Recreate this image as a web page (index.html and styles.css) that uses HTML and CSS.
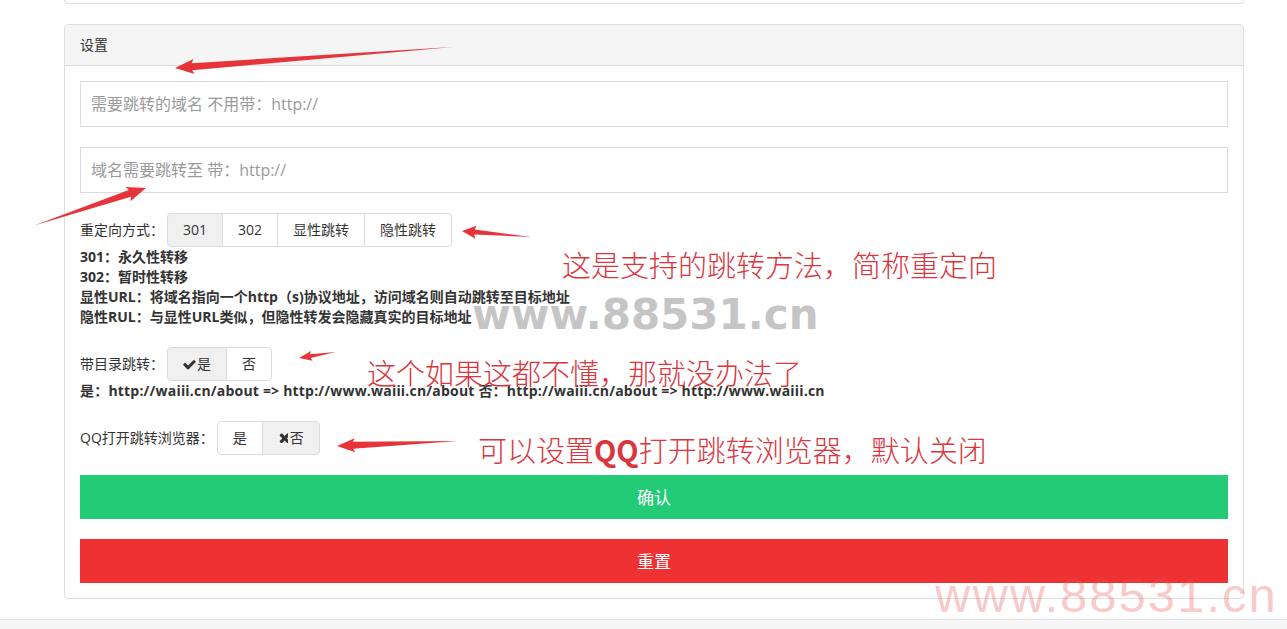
FILE: index.html
```html
<!DOCTYPE html>
<html lang="zh-CN">
<head>
<meta charset="utf-8">
<title>设置</title>
<link rel="stylesheet" href="styles.css">
</head>
<body>
<div class="page">
  <div class="wrap">
    <div class="panel panel-prev"></div>
    <div class="panel">
      <div class="panel-heading">设置</div>
      <div class="panel-body">
        <input class="field" type="text" placeholder="需要跳转的域名 不用带：http://">
        <input class="field" type="text" placeholder="域名需要跳转至 带：http://">

        <div class="opt-row">
          <span class="lbl">重定向方式：</span>
          <div class="btn-group">
            <span class="btn active">301</span>
            <span class="btn">302</span>
            <span class="btn">显性跳转</span>
            <span class="btn">隐性跳转</span>
          </div>
        </div>
        <div class="help">
          <div>301：永久性转移</div>
          <div>302：暂时性转移</div>
          <div>显性URL：将域名指向一个http（s)协议地址，访问域名则自动跳转至目标地址</div>
          <div>隐性RUL：与显性URL类似，但隐性转发会隐藏真实的目标地址</div>
        </div>

        <div class="opt-row">
          <span class="lbl">带目录跳转：</span>
          <div class="btn-group">
            <span class="btn active"><svg class="ico ico-check" viewBox="100 300 1600 1200"><path d="M1671 566q0 40-28 68l-724 724-136 136q-28 28-68 28t-68-28l-136-136-362-362q-28-28-28-68t28-68l136-136q28-28 68-28t68 28l294 295 656-657q28-28 68-28t68 28l136 136q28 28 28 68z"/></svg>是</span>
            <span class="btn">否</span>
          </div>
        </div>
        <div class="help">
          <div class="help-wide">是：http://waiii.cn/about =&gt; http://www.waiii.cn/about 否：http://waiii.cn/about =&gt; http://www.waiii.cn</div>
        </div>

        <div class="opt-row">
          <span class="lbl">QQ打开跳转浏览器：</span>
          <div class="btn-group">
            <span class="btn">是</span>
            <span class="btn active"><svg class="ico ico-times" viewBox="100 320 1200 1200"><path d="M1490 1322q0 40-28 68l-136 136q-28 28-68 28t-68-28l-294-294-294 294q-28 28-68 28t-68-28l-136-136q-28-28-28-68t28-68l294-294-294-294q-28-28-28-68t28-68l136-136q28-28 68-28t68 28l294 294 294-294q28-28 68-28t68 28l136 136q28 28 28 68t-28 68l-294 294 294 294q28 28 28 68z"/></svg>否</span>
          </div>
        </div>

        <button class="big-btn btn-ok" type="button">确认</button>
        <button class="big-btn btn-reset" type="button">重置</button>
      </div>
    </div>
  </div>
  <div class="footer-band"></div>

  <svg class="arrows" width="1287" height="629" viewBox="0 0 1287 629">
    <g fill="#e6353a">
      <path transform="translate(175,68) rotate(-4.32)" d="M0,0 L19,-7.5 L17,-3.5 L279,0 L17,3.5 L19,7.5 Z"/>
      <path transform="translate(146,188) rotate(161.5)" d="M0,0 L19,-7.5 L17,-3.5 L118,0 L17,3.5 L19,7.5 Z"/>
      <path transform="translate(462,231) rotate(4.9)" d="M0,0 L14,-6.5 L12.5,-2.5 L70,0 L12.5,2.5 L14,6.5 Z"/>
      <path transform="translate(299,358) rotate(-9.46)" d="M0,0 L13,-5 L11.5,-2 L37,0 L11.5,2 L13,5 Z"/>
      <path transform="translate(337,446) rotate(-2.37)" d="M0,0 L18,-7 L16,-3.5 L121,0 L16,3.5 L18,7 Z"/>
    </g>
  </svg>

  <div class="note note-1">这是支持的跳转方法，简称重定向</div>
  <div class="note note-2">这个如果这都不懂，那就没办法了</div>
  <div class="note note-3">可以设置<b>QQ</b>打开跳转浏览器，默认关闭</div>

  <div class="wm wm-gray">www.88531.cn</div>
  <div class="wm wm-pink">www.88531.cn</div>
</div>
</body>
</html>
```

FILE: styles.css
```css
* { box-sizing: border-box; }

html, body {
  margin: 0;
  padding: 0;
  background: #fff;
}

body {
  font-family: "Open Sans", "Noto Sans CJK JP", sans-serif;
  font-size: 14px;
  line-height: 20px;
  color: #333;
}

.page {
  position: relative;
  width: 1287px;
  height: 629px;
  overflow: hidden;
}

.wrap {
  margin-left: 64px;
  width: 1180px;
}

.panel {
  border: 1px solid #dedede;
  border-radius: 4px;
  background: #fff;
  margin-bottom: 20px;
}

.panel-prev {
  height: 4px;
  border-top: none;
  border-radius: 0 0 4px 4px;
}

.panel-heading {
  height: 41px;
  padding: 10px 15px;
  background: #f5f5f5;
  border-bottom: 1px solid #dedede;
  border-radius: 3px 3px 0 0;
  font-size: 14px;
  line-height: 20px;
  color: #333;
}

.panel-body {
  padding: 15px;
  display: flex;
  flex-direction: column;
}

.field {
  display: block;
  width: 100%;
  height: 46px;
  margin: 0 0 20px 0;
  padding: 0 10px;
  border: 1px solid #dcdcdc;
  border-radius: 0;
  font-family: "Open Sans", "Noto Sans CJK JP", sans-serif;
  font-size: 16px;
  color: #555;
  outline: none;
}

.field::placeholder {
  color: #9a9a9a;
}

.opt-row {
  display: flex;
  align-items: center;
  height: 34px;
}

.opt-row + .opt-row,
.help + .opt-row {
  margin-top: 20px;
}

.lbl {
  margin-right: 3px;
  color: #333;
  white-space: nowrap;
}

.btn-group {
  display: flex;
  height: 34px;
}

.btn {
  display: flex;
  align-items: center;
  height: 34px;
  padding: 0 15px;
  border: 1px solid #dcdcdc;
  background: #fff;
  color: #333;
  font-size: 14px;
  white-space: nowrap;
}

.btn + .btn {
  margin-left: -1px;
}

.btn:first-child {
  border-radius: 4px 0 0 4px;
}

.btn:last-child {
  border-radius: 0 4px 4px 0;
}

.btn.active {
  background: #f0f0f0;
}

.ico {
  width: 13px;
  height: 11px;
  fill: #333;
  margin-right: 1px;
}

.ico-times {
  width: 10px;
  height: 10px;
  margin-right: 2px;
}

.help {
  font-weight: 700;
  color: #333;
  line-height: 20px;
  white-space: nowrap;
}

.help-wide {
  letter-spacing: 0.2px;
}

.big-btn {
  display: block;
  width: 100%;
  height: 44px;
  border: none;
  border-radius: 0;
  color: #fff;
  font-family: "Noto Sans CJK SC", sans-serif;
  font-size: 17px;
  line-height: 24px;
  padding: 10px 0;
  text-align: center;
}

.btn-ok {
  margin-top: 20px;
  background: #23cb77;
}

.btn-reset {
  margin-top: 20px;
  background: #ee3234;
}

.footer-band {
  height: 20px;
  background: #f5f5f5;
  border-top: 1px solid #e6e6e6;
}

.arrows {
  position: absolute;
  left: 0;
  top: 0;
  pointer-events: none;
}

.note {
  position: absolute;
  font-family: "Noto Sans CJK SC", sans-serif;
  font-weight: 300;
  font-size: 29px;
  line-height: 29px;
  color: #d9363e;
  white-space: nowrap;
}

.note b {
  font-weight: 700;
}

.note-1 { left: 562px; top: 250px; }
.note-2 { left: 367px; top: 358px; }
.note-3 { left: 478px; top: 435px; }

.wm {
  position: absolute;
  white-space: nowrap;
  pointer-events: none;
}

.wm-gray {
  left: 472px;
  top: 294px;
  font-family: "DejaVu Sans", sans-serif;
  font-weight: 700;
  font-size: 42px;
  line-height: 42px;
  color: rgba(140, 140, 140, 0.5);
}

.wm-pink {
  left: 935px;
  top: 571px;
  font-family: "Liberation Sans", sans-serif;
  font-size: 49px;
  line-height: 49px;
  letter-spacing: 2px;
  color: rgba(232, 80, 80, 0.3);
}
```
